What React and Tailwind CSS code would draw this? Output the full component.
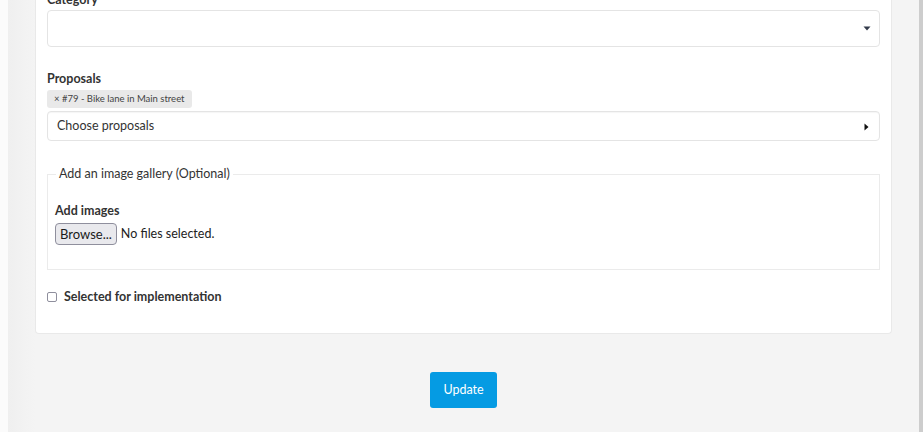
import { useState } from "react";

function Caret({ dir }) {
  if (dir === "down") {
    return (
      <svg width="8" height="5" viewBox="0 0 8 5" className="block">
        <path d="M0.5 0.5h7L4 4.5z" fill="#333a4a" />
      </svg>
    );
  }
  return (
    <svg width="5" height="8" viewBox="0 0 5 8" className="block">
      <path d="M0.5 0.5v7L4.5 4z" fill="#111" />
    </svg>
  );
}

function App() {
  const [selected, setSelected] = useState(false);

  return (
    <div
      className="flex h-[432px] w-[923px] overflow-hidden text-[#333] text-[12.5px]"
      style={{ fontFamily: "Lato, 'Noto Sans', sans-serif" }}
    >
      <div className="w-[8px] bg-[#fbfbfb]" />
      <div className="flex-1 flex flex-col bg-[#f4f4f4] bg-gradient-to-r from-[#efefef] to-[#f4f4f4] bg-[length:27px_100%] bg-no-repeat">
        <div className="mx-[27px] bg-white border border-t-0 border-[#e9e9e9] rounded-b-[4px] px-[11px] pb-[28px]">
          <div className="-mt-[8px] h-[16px] leading-[16px] font-bold">Category</div>
          <div className="mt-[2px] h-[37px] border border-[#e4e4e4] rounded-[4px] flex items-center justify-end pr-[8px]">
            <Caret dir="down" />
          </div>

          <div className="mt-[24px] h-[16px] leading-[16px] font-bold">Proposals</div>
          <div className="mt-[3px] flex">
            <span className="h-[18px] leading-[18px] px-[7px] bg-[#e9e9e9] rounded-[3px] text-[9.5px] text-[#444]">
              × #79 - Bike lane in Main street
            </span>
          </div>
          <div className="mt-[3px] h-[30px] border border-[#e4e4e4] rounded-[4px] flex items-center justify-between pl-[9px] pr-[10px] pt-[1px] shadow-[inset_0_1px_1px_rgba(0,0,0,0.04)]">
            <span>Choose proposals</span>
            <Caret dir="right" />
          </div>

          <fieldset className="mt-[25px] border border-[#ebebeb] px-[7px] pb-[24px] h-[104px]">
            <legend className="px-[3px] ml-[1px] leading-[16px]">Add an image gallery (Optional)</legend>
            <div className="mt-[21px] h-[16px] leading-[16px] font-bold">Add images</div>
            <div className="mt-[4px] flex items-center gap-[4px]">
              <button className="h-[22px] px-[4px] border border-[#8f8f9d] rounded-[4px] bg-[#e9e9ed] text-[13px] text-[#1a1a1a] leading-[18px]">
                Browse...
              </button>
              <span className="text-[#222]">No files selected.</span>
            </div>
          </fieldset>

          <label className="mt-[19px] flex items-center gap-[7px] font-bold h-[16px]">
            <input
              type="checkbox"
              checked={selected}
              onChange={(e) => setSelected(e.target.checked)}
              className="appearance-none w-[10px] h-[10px] border border-[#8f8f9d] rounded-[2px] bg-white"
            />
            Selected for implementation
          </label>
        </div>

        <div className="mt-[38px] flex justify-center">
          <button className="h-[36px] px-[13px] bg-[#059be3] text-white rounded-[3px] text-[12.5px]">
            Update
          </button>
        </div>
      </div>
      <div className="w-[4px] bg-[#cdcdcd]" />
    </div>
  );
}

export default App;
